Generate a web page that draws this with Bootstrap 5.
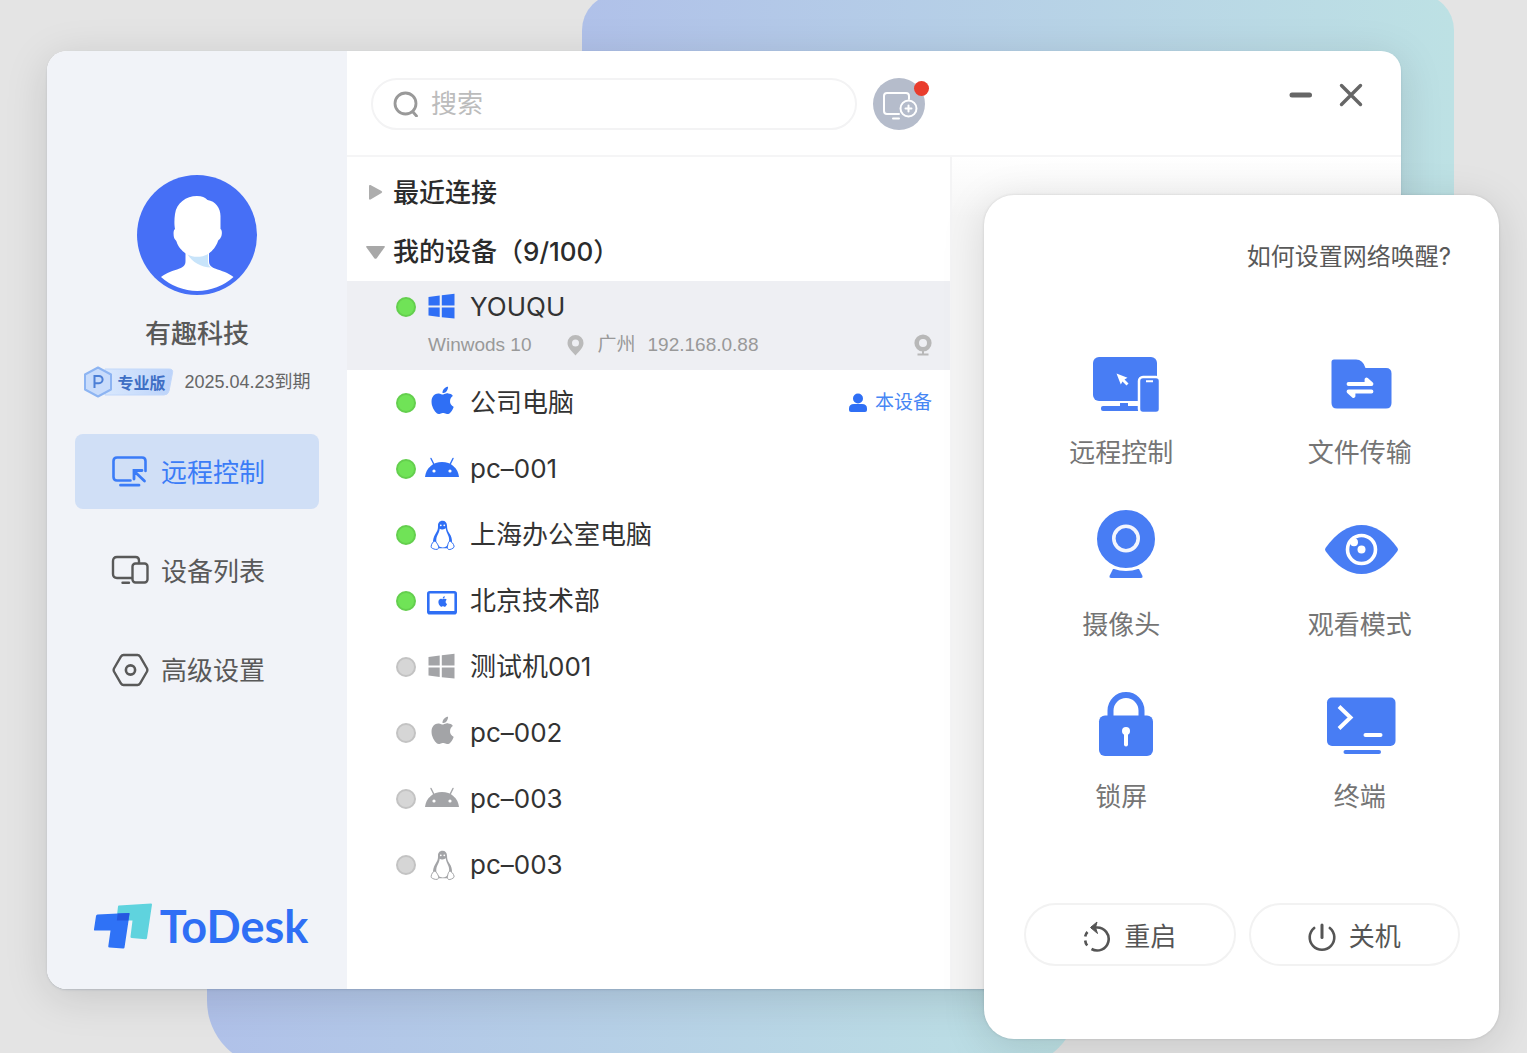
<!DOCTYPE html>
<html lang="zh-CN">
<head>
<meta charset="utf-8">
<meta name="viewport" content="width=device-width, initial-scale=1">
<title>ToDesk</title>
<link href="https://cdn.jsdelivr.net/npm/bootstrap@5.3.0/dist/css/bootstrap.min.css" rel="stylesheet">
<style>
:root { --td-blue: #2f6ff5; --td-tile: #487df4; --td-text: #333; --td-muted: #999; }
body { background: #e4e4e4; color: var(--td-text); font-family: Inter, "Noto Sans CJK SC", sans-serif; font-size: 26px; line-height: 38px; }
svg { display: block; flex: none; }
.stage { min-height: 100vh; padding: 51px 126px 64px 47px; }
.backdrop-top, .backdrop-bottom { position: absolute; background: linear-gradient(90deg, #b0c1e9, #bde1e4); }
.backdrop-top { top: -6px; left: 582px; right: 73px; height: 400px; border-radius: 36px; }
.backdrop-bottom { top: 800px; left: 207px; right: 449px; height: 267px; border-radius: 66px; }
.app-window { min-height: 938px; border-radius: 20px; overflow: hidden; background: #fff; }
.window-shadow { border-radius: 20px; box-shadow: 0 8px 44px rgba(0,0,0,.13), 0 1px 2px rgba(80,100,130,.22); }

.sidebar { width: 300px; flex: none; background: #f1f3f8; padding: 124px 28px 34px; color: #595959; }
.plan-row { height: 34px; margin: 12px 0 35px; font-size: 18px; line-height: 34px; gap: 10px; }
.plan-tag { height: 28px; padding: 0 9px 0 34px; font-size: 16px; line-height: 30px; font-weight: 700; color: #3f6fc4; }
.plan-tag svg { position: absolute; left: 0; top: -3px; }
.plan-tag span { position: relative; }
.plan-date { font-family: "Liberation Sans", "Noto Sans CJK SC", sans-serif; color: #666; }
.side-nav { gap: 24px; }
.side-nav .nav-link { height: 75px; padding: 0 36px; gap: 12px; color: #595959; border-radius: 8px; }
.side-nav .nav-link span { padding-top: 3px; }
.side-nav .nav-link.active { background: #d0dff6; color: #3b7cf7; }
.brand-name { font-family: Lato, sans-serif; font-weight: 700; font-size: 45px; line-height: 50px; color: var(--td-blue); }

.top-bar { height: 106px; padding: 27px 38px 0 24px; gap: 16px; border-bottom: 2px solid #f5f5f6; }
.search-box { flex: 0 1 486px; height: 52px; border: 2px solid #f3f3f4; border-radius: 26px; padding: 0 20px; gap: 12px; }
.search-box input { font-size: 26px; line-height: 38px; color: var(--td-text); }
.search-box input::placeholder { color: #bcbcbc; opacity: 1; }
.search-box input:focus { outline: none; }
.add-device { width: 52px; height: 52px; border-radius: 50%; background: #b5bccb; padding: 0; border: 0; }
.new-dot { position: absolute; width: 15px; height: 15px; border-radius: 50%; background: #e93d2d; top: 3px; right: -4px; }
.window-controls { gap: 26px; }
.window-btn { border: 0; padding: 0; background: none; color: #666; width: 24px; height: 34px; }

.device-pane { flex: 0 0 57.4%; padding-top: 6px; border-right: 2px solid #f4f4f5; }
.detail-pane { flex: 1 1 0; background: linear-gradient(#fff, #f5f5f5 60px); }
.group-head { height: 59px; padding: 0 21px; gap: 9px; font-weight: 500; color: #2b2b2b; border: 0; background: none; text-align: left; }
.device { height: 66px; padding: 0 18px 0 49px; color: var(--td-text); }
.device.selected { height: 89px; padding-top: 7px; background: #eeeff3; }
.device-icon { margin: 0 10px 0 8px; color: var(--td-blue); }
.offline .device-icon { color: #a3a4a7; }
.status { width: 20px; height: 20px; border-radius: 50%; background: #70e357; border: 2px solid #64cf4e; flex: none; }
.offline .status { background: #d6d6d6; border-color: #c3c3c3; }
.device-meta { padding-left: 32px; font-family: "Liberation Sans", "Noto Sans CJK SC", sans-serif; font-size: 19px; line-height: 38px; color: var(--td-muted); }
.place-pin { margin: 0 14px 0 35px; }
.place-name { margin-right: 12px; }
.self-tag { font-size: 19px; gap: 8px; color: #4686f4; }

.action-panel { position: absolute; top: 195px; right: 28px; width: 515px; background: #fff; border-radius: 30px; padding: 44px 20px 73px 18px; box-shadow: 0 8px 44px rgba(0,0,0,.13), 0 0 3px rgba(0,0,0,.12); }
.help-link { display: block; font-size: 24px; line-height: 36px; color: #595959; text-align: right; text-decoration: none; padding-right: 28px; margin-bottom: 63px; }
.tile { border: 0; background: none; padding: 0; gap: 8px; margin-bottom: 38px; color: #757575; }
.tile svg { color: var(--td-tile); }
.power-row { margin-top: 49px; padding: 0 19px 0 22px; gap: 13px; }
.power-btn { height: 63px; border: 2px solid #f2f2f2; border-radius: 32px; background: #fff; color: #555; gap: 13px; font-size: 26px; padding: 4px 0 0; }
</style>
</head>
<body>
<svg width="0" height="0" class="position-absolute" aria-hidden="true">
  <symbol id="i-apple" viewBox="0 0 36 36"><path fill="currentColor" transform="translate(5 1.8) scale(1.7)" d="M11.182.008C11.148-.03 9.923.023 8.857 1.18c-1.066 1.156-.902 2.482-.878 2.516s1.52.087 2.475-1.258.762-2.391.728-2.43m3.314 11.733c-.048-.096-2.325-1.234-2.113-3.422s1.675-2.789 1.698-2.854-.597-.79-1.254-1.157a3.7 3.7 0 0 0-1.563-.434c-.108-.003-.483-.095-1.254.116-.508.139-1.653.589-1.968.607-.316.018-1.256-.522-2.267-.665-.647-.125-1.333.131-1.824.328-.49.196-1.422.754-2.074 2.237-.652 1.482-.311 3.83-.067 4.56s.625 1.924 1.273 2.796c.576.984 1.34 1.667 1.659 1.899s1.219.386 1.843.067c.502-.308 1.408-.485 1.766-.472.357.013 1.061.154 1.782.539.571.197 1.111.115 1.652-.105.541-.221 1.324-1.059 2.238-2.758q.52-1.185.473-1.282"/></symbol>
  <symbol id="i-windows" viewBox="0 0 36 36"><path fill="currentColor" d="M4.5 8 15.7 6.5V16.4H4.5zM17.8 6.2 30.5 4.8V16.4H17.8zM4.5 18.4H15.7V28L4.5 26.6zM17.8 18.4H30.5V29.6L17.8 28.2z"/></symbol>
  <symbol id="i-android" viewBox="0 0 36 36"><path fill="currentColor" d="M1 26C2 17 9 11 18 11s16 6 17 15z"/><path stroke="currentColor" stroke-width="1.4" stroke-linecap="round" d="m7 7.5 3 6M29 7.5l-3 6"/><circle cx="10" cy="20" r="1.6" fill="#fff"/><circle cx="26" cy="20" r="1.6" fill="#fff"/></symbol>
  <symbol id="i-linux" viewBox="0 0 36 36"><path fill="currentColor" d="M18.5 3.800c-3 0-4.600 2.200-4.500 5 .1 3.400-.5 5-2.600 8.200-1.600 2.500-2.600 6-2.400 9.200l5.500 5h8.500l5-5c.3-4-.8-7.200-2.400-9.400-2-2.800-2.500-4.500-2.600-8 0-3-1.600-5-4.500-5z"/><path fill="#fff" d="M18.500 12.500c1.500 0 2.600-.9 3.200-1.200.4 3 1.600 5 2.700 7.700 1.500 3.600.8 8.500-2.200 10.500-2.200 1.300-5.500 1.200-7.300-.2-3-2.500-3.200-7-1.800-10.300 1.200-2.500 2.300-4.500 2.600-7.300.6.400 1.700.8 2.800.8z"/><circle cx="16.800" cy="8.300" r=".9" fill="#fff"/><circle cx="20.300" cy="8.300" r=".9" fill="#fff"/><path fill="#fff" stroke="currentColor" d="M9.800 24.500c1.500-1 2.800 1 4 3.200 1.300 2.200 1.200 3.800-.5 4.600-1.600.6-5.300-.8-6-1.800-.5-1 .3-4.500 2.500-6zM26.800 24.500c-1.500-1-2.300.6-3 3.200-.6 2.500-.5 4 .6 4.700 1.500.8 5-1.200 5.600-2.200.5-1-.8-4.300-3.200-5.700z"/></symbol>
  <symbol id="i-macbook" viewBox="0 0 36 36"><rect x="4.300" y="9.300" width="27.400" height="21" rx="1.500" fill="#fff" stroke="currentColor" stroke-width="2.600"/><path stroke="currentColor" stroke-width="3" d="M4 29.500h28"/><use href="#i-apple" x="11.500" y="12.500" width="14" height="14"/></symbol>
</svg>

<main class="stage position-relative overflow-hidden">
  <div class="backdrop-top"></div>
  <div class="backdrop-bottom"></div>

  <div class="window-shadow position-relative">
  <div class="app-window d-flex">
    <aside class="sidebar d-flex flex-column align-items-center">
      <svg width="120" height="120" viewBox="0 0 120 120" role="img" aria-label="头像">
        <circle cx="60" cy="60" r="60" fill="#466ff6"/>
        <path fill="#fff" d="M60 21c5 0 8 1.500 10.500 4 8 1 13 8 13 16v13c2 1 1.500 6 .5 8-1 2.500-2.500 2.500-3 4-2 6-5.500 9.500-9 12.500V86c0 4 2 6 6 7.500 7 2.700 13 4 18.500 8.500a54 54 0 0 1-72.500 0C29.500 97.500 36 96 42.500 93.500c4-1.500 6-3.500 6-7.500v-7.500C45 75.500 41 72 39.500 66.500c-.5-1.500-2-2-2.500-4-.5-2.500-1-7 1-8.500-.8-4-.8-10 0-15 1.500-11 11-18 22-18z"/>
        <path fill="#c8e4fa" d="M50.500 79.500c6 3.200 14 3.200 20.500-.5V86c0 3.500.8 5 3 6.500-10-.5-18.500-5-23.500-13z"/>
      </svg>
      <div class="fw-medium mt-3 pt-1">有趣科技</div>
      <div class="plan-row d-flex align-items-center text-nowrap">
        <div class="plan-tag position-relative">
          <svg width="92" height="34" viewBox="0 0 92 34" aria-hidden="true">
            <defs><linearGradient id="tagFill"><stop offset="0" stop-color="#d9e8fd"/><stop offset="1" stop-color="#bcd3fa"/></linearGradient></defs>
            <path d="M22 4H86Q90.500 4 89.500 8L86 26Q85 30 81 30H22z" fill="url(#tagFill)" stroke="#c3d8fa"/>
            <path d="M15 2.500 28 9.500v15L15 31.500 2 24.500v-15z" fill="#c9dcfb" stroke="#8db4f2" stroke-width="2" stroke-linejoin="round"/>
            <path d="M11.500 23V11h4.500a3.600 3.600 0 0 1 0 7.200h-4" fill="none" stroke="#4c7fd6" stroke-width="2"/>
          </svg>
          <span>专业版</span>
        </div>
        <span class="plan-date">2025.04.23到期</span>
      </div>
      <nav class="side-nav nav flex-column align-self-stretch" aria-label="主导航">
        <a href="#" class="nav-link active d-flex align-items-center" aria-current="page">
          <svg width="38" height="38" viewBox="0 0 38 38" fill="none" stroke="currentColor" stroke-width="2.600" stroke-linecap="round" aria-hidden="true"><path d="M19.500 27.500H6q-3.500 0-3.500-3.500V8q0-3.500 3.500-3.500H31q3.500 0 3.500 3.500V18"/><path d="M9.500 32.200H28M33.500 28 23.500 18.500M23 26v-8.500h8" stroke-width="2.800"/></svg>
          <span>远程控制</span></a>
        <a href="#" class="nav-link d-flex align-items-center">
          <svg width="38" height="38" viewBox="0 0 38 38" fill="none" stroke="currentColor" stroke-width="2.400" stroke-linecap="round" aria-hidden="true"><path d="M21 26H6q-4 0-4-4V9q0-4 4-4H24.500q3.500 0 3.500 3.500V11M11.500 30.800H18"/><rect x="21.500" y="11.500" width="15" height="19" rx="3"/></svg>
          <span>设备列表</span></a>
        <a href="#" class="nav-link d-flex align-items-center">
          <svg width="38" height="38" viewBox="0 0 38 38" fill="none" stroke="currentColor" stroke-width="2.400" aria-hidden="true"><path d="M12.500 4H26.500Q28 4 29 5.500L36 17.500Q36.700 19 36 20.500L29 32.500Q28 34 26.500 34H12.500Q11 34 10 32.500L3 20.500Q2.300 19 3 17.500L10 5.500Q11 4 12.500 4z"/><circle cx="19.500" cy="19" r="4.600" stroke-width="2.600"/></svg>
          <span>高级设置</span></a>
      </nav>
      <div class="d-flex align-items-center mt-auto ps-2 pb-1">
        <svg width="58" height="46" viewBox="0 0 58 46" aria-hidden="true"><path fill="#5fd3de" d="M25 2.500 57 .500q1 0 1 1L53 35q-.3 1.300-1.500 1.200L37.500 35q-1.300-.2-1-1.500L38.500 17.500H23.500q-1 0-1-1L24 3.500q0-1 1-1z"/><path fill="#2f72f6" d="M3.500 11.500 34.500 10q1.200 0 1 1.200L30.500 44.500q-.2 1.200-1.500 1L15.500 44.500q-1.500-.2-1.200-1.500L16.500 27.500H1q-1.200 0-1-1.200L2 13q.2-1.400 1.500-1.500z"/><path fill="#2558e0" d="M23.700 10.500 35.500 10 34.300 17.500H22.800z"/></svg>
        <span class="brand-name ms-2">ToDesk</span>
      </div>
    </aside>

    <section class="d-flex flex-column flex-grow-1">
      <header class="top-bar d-flex align-items-start">
        <label class="search-box d-flex align-items-center">
          <svg width="26" height="26" viewBox="0 0 26 26" fill="none" stroke="#999" stroke-width="2.800" stroke-linecap="round" role="img" aria-label="搜索"><circle cx="12.500" cy="12.500" r="10.500"/><path d="m20 21 3.500 4"/></svg>
          <input type="search" class="border-0 bg-transparent p-0 flex-grow-1 w-100" placeholder="搜索">
        </label>
        <button type="button" class="add-device position-relative flex-shrink-0" aria-label="添加设备">
          <svg width="52" height="52" viewBox="0 0 52 52" fill="none" stroke="#fff" stroke-width="2" stroke-linecap="round"><path d="M26 36H14q-3 0-3-3V18q0-3 3-3H33q3 0 3 3v3M20 40.500h6"/><circle cx="35.500" cy="30.500" r="8"/><path d="M35.500 27.500v6M32.500 30.500h6"/></svg>
          <span class="new-dot"></span>
        </button>
        <div class="window-controls d-flex ms-auto">
          <button type="button" class="window-btn" aria-label="最小化"><svg width="24" height="34" viewBox="0 0 24 34" stroke="currentColor" stroke-width="5" stroke-linecap="round"><path d="M3 17h17.500"/></svg></button>
          <button type="button" class="window-btn" aria-label="关闭"><svg width="24" height="34" viewBox="0 0 24 34" stroke="currentColor" stroke-width="3.400" stroke-linecap="round"><path d="m2.500 7.500 19 19m0-19-19 19"/></svg></button>
        </div>
      </header>

      <div class="d-flex flex-grow-1">
        <div class="device-pane d-flex flex-column">
          <button type="button" class="group-head d-flex align-items-center" aria-expanded="false">
            <svg width="16" height="20" viewBox="0 0 16 20" fill="#adadad" aria-hidden="true"><path d="M1 3q0-1.500 1.500-1L13.500 8q1.500 1 0 2L2.500 16.500Q1 17 1 15.500z"/></svg>最近连接</button>
          <button type="button" class="group-head d-flex align-items-center" aria-expanded="true">
            <svg width="16" height="20" viewBox="0 0 16 20" fill="#a8a8a8" overflow="visible" aria-hidden="true"><path d="M-1 4h17q1.500 0 .500 1.500L8.700 16.200q-1.200 1.300-2.400 0L-1.500 5.500Q-2.500 4-1 4z"/></svg>我的设备（9/100）</button>

          <div class="device selected">
            <div class="d-flex align-items-center"><span class="status"></span><svg class="device-icon" width="36" height="36"><use href="#i-windows"/></svg>YOUQU</div>
            <div class="device-meta d-flex align-items-center">
              <span>Winwods 10</span>
              <svg class="place-pin" width="17" height="22" viewBox="0 0 17 22" fill="#bababa" aria-hidden="true"><path fill-rule="evenodd" d="M8.500 1A8 8 0 0 1 16.500 9c0 4.500-4 8-8 12.500C4.500 17 .500 13.500.500 9a8 8 0 0 1 8-8zm0 4.500a3.500 3.500 0 1 0 0 7 3.500 3.500 0 0 0 0-7z"/></svg>
              <span class="place-name">广州</span><span>192.168.0.88</span>
              <svg class="ms-auto" width="18" height="22" viewBox="0 0 18 22" fill="none" stroke="#b8b8b8" aria-hidden="true"><circle cx="9" cy="9" r="6.300" stroke-width="4.600"/><path stroke-width="2" d="M9 17v3M3.500 20.500h11"/></svg>
            </div>
          </div>
          <div class="device d-flex align-items-center"><span class="status"></span><svg class="device-icon" width="36" height="36"><use href="#i-apple"/></svg>公司电脑
            <span class="self-tag d-flex align-items-center ms-auto"><svg width="18" height="20" viewBox="0 0 18 20" fill="#2f6ff5" aria-hidden="true"><circle cx="9" cy="5.500" r="5"/><path d="M0 17v-1.500Q0 11 5 11h8q5 0 5 4.500V17q0 2-2 2H2q-2 0-2-2z"/></svg>本设备</span></div>
          <div class="device d-flex align-items-center"><span class="status"></span><svg class="device-icon" width="36" height="36"><use href="#i-android"/></svg>pc–001</div>
          <div class="device d-flex align-items-center"><span class="status"></span><svg class="device-icon" width="36" height="36"><use href="#i-linux"/></svg>上海办公室电脑</div>
          <div class="device d-flex align-items-center"><span class="status"></span><svg class="device-icon" width="36" height="36"><use href="#i-macbook"/></svg>北京技术部</div>
          <div class="device offline d-flex align-items-center"><span class="status"></span><svg class="device-icon" width="36" height="36"><use href="#i-windows"/></svg>测试机001</div>
          <div class="device offline d-flex align-items-center"><span class="status"></span><svg class="device-icon" width="36" height="36"><use href="#i-apple"/></svg>pc–002</div>
          <div class="device offline d-flex align-items-center"><span class="status"></span><svg class="device-icon" width="36" height="36"><use href="#i-android"/></svg>pc–003</div>
          <div class="device offline d-flex align-items-center"><span class="status"></span><svg class="device-icon" width="36" height="36"><use href="#i-linux"/></svg>pc–003</div>
        </div>
        <div class="detail-pane"></div>
      </div>
    </section>
  </div>
  </div>

  <section class="action-panel" aria-label="设备操作">
    <a href="#" class="help-link">如何设置网络唤醒?</a>
    <div class="row g-0">
      <button type="button" class="tile col-6 d-flex flex-column align-items-center">
        <svg width="88" height="88" viewBox="0 0 88 88" fill="currentColor"><rect x="16" y="19" width="64" height="44" rx="6"/><path d="M43 65h8v3h-8z"/><rect x="24" y="68" width="40" height="5" rx="2"/><rect x="62" y="39" width="21" height="36" rx="4" stroke="#fff" stroke-width="2.500"/><path fill="#fff" d="M69 42.200h7v2h-7zM39.500 35.500 50.500 39.700 47.500 41.500 51.500 45.500 49.500 47.500 45.500 43.500 43.800 46.500z"/></svg>远程控制</button>
      <button type="button" class="tile col-6 d-flex flex-column align-items-center">
        <svg width="88" height="88" viewBox="0 0 88 88" fill="currentColor"><path d="M18 21.500H40q7 0 9.500 8.500H70q5.500 0 5.500 5.500V65q0 5.500-5.500 5.500H21q-5.500 0-5.500-5.500V24q0-2.500 2.500-2.500z"/><path fill="none" stroke="#fff" stroke-width="3.800" stroke-linecap="round" stroke-linejoin="round" d="M32.500 46H55.500L50.500 41.500V45M55.500 53.500H32.500L37.500 58V54"/></svg>文件传输</button>
      <button type="button" class="tile col-6 d-flex flex-column align-items-center">
        <svg width="88" height="88" viewBox="0 0 88 88" fill="currentColor"><path d="M36 59H62L65.500 66Q66 68 64 68H34Q32 68 32.500 66z"/><circle cx="49" cy="29" r="30.500" stroke="#fff" stroke-width="3"/><circle cx="49" cy="28.500" r="12.200" fill="none" stroke="#f3f5fd" stroke-width="3.600"/></svg>摄像头</button>
      <button type="button" class="tile col-6 d-flex flex-column align-items-center">
        <svg width="88" height="88" viewBox="0 0 88 88"><path fill="currentColor" d="M9.500 38Q26 15 45.500 15T81.500 38Q82.500 39.500 81.500 41 65 64 45.500 64T9.500 41Q8.500 39.500 9.500 38z"/><circle cx="45.500" cy="39.500" r="14" fill="none" stroke="#fff" stroke-width="3.600"/><circle cx="45.500" cy="39.500" r="4" fill="#fff"/><circle cx="38" cy="32.300" r="4" fill="#fff"/></svg>观看模式</button>
      <button type="button" class="tile col-6 d-flex flex-column align-items-center">
        <svg width="88" height="88" viewBox="0 0 88 88"><rect x="22" y="33.500" width="54" height="40.500" rx="6" fill="currentColor"/><path fill="none" stroke="currentColor" stroke-width="6" d="M33.500 36V28.500a15.500 15.500 0 0 1 31 0V36"/><circle cx="49" cy="49" r="4" fill="#fff"/><path stroke="#fff" stroke-width="4" stroke-linecap="round" d="M49 50v12.500"/></svg>锁屏</button>
      <button type="button" class="tile col-6 d-flex flex-column align-items-center">
        <svg width="88" height="88" viewBox="0 0 88 88" fill="none" stroke="#fff" stroke-width="4" stroke-linecap="round"><rect x="11" y="15.500" width="68.500" height="48.500" rx="5" fill="currentColor" stroke="none"/><rect x="27.500" y="68" width="37.500" height="4" rx="2" fill="currentColor" stroke="none"/><path stroke-linecap="butt" d="M23 24.500 34.500 35.500 23 46.500"/><path d="M49.500 53h15"/></svg>终端</button>
    </div>
    <div class="power-row d-flex">
      <button type="button" class="power-btn d-flex flex-fill align-items-center justify-content-center">
        <svg width="28" height="32" viewBox="0 0 28 32" fill="none" stroke="currentColor" stroke-width="2.600" aria-hidden="true"><path d="M8 6.500H14A11.500 11.500 0 1 1 8.500 28"/><path fill="currentColor" stroke-width="1" d="M14 1 7.500 6.500 14.500 12.500 12.500 6.500z"/><path d="M4.500 11Q2.500 13 2.200 15.500M2.200 19.500Q2.500 22.500 4.200 24.500"/></svg>重启</button>
      <button type="button" class="power-btn d-flex flex-fill align-items-center justify-content-center">
        <svg width="28" height="32" viewBox="0 0 28 32" fill="none" stroke="currentColor" stroke-width="2.600" stroke-linecap="round" aria-hidden="true"><path d="M6.200 7A12.300 12.300 0 1 0 21.800 7"/><path stroke-width="3" d="M14 4v12.500"/></svg>关机</button>
    </div>
  </section>
</main>
<script src="https://cdn.jsdelivr.net/npm/bootstrap@5.3.0/dist/js/bootstrap.bundle.min.js"></script>
</body>
</html>
